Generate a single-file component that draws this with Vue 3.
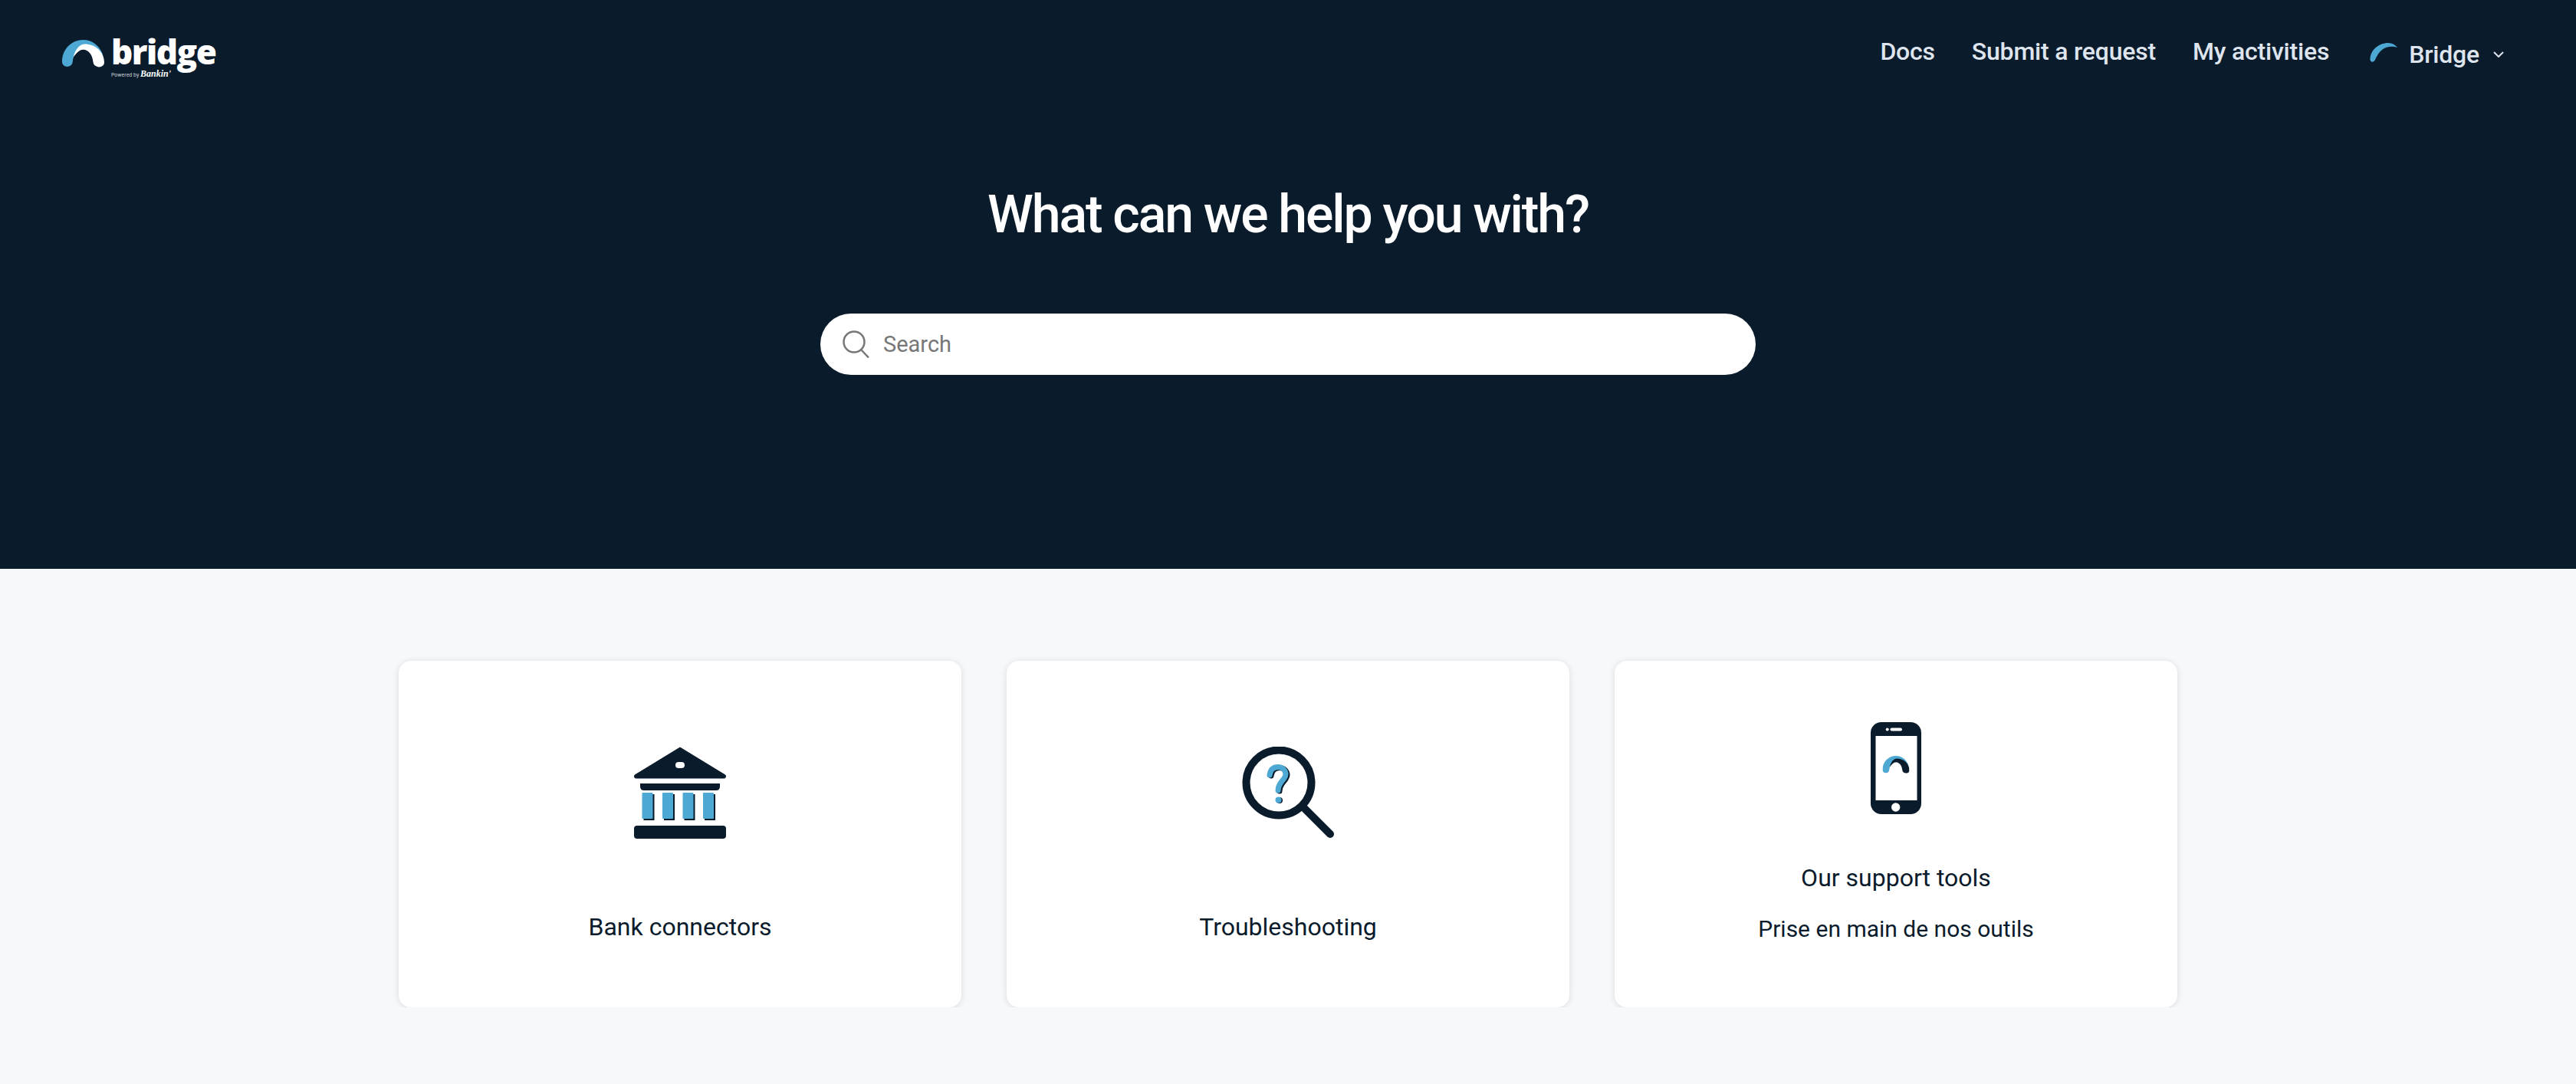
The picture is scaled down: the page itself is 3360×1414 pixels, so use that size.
<template>
  <div class="page">
    <section class="hero">
      <header class="topbar">
        <a class="logo">
          <svg class="logo-arc" viewBox="92 97 166 108">
            <path :d="arcBack" fill="#4da9d4" />
            <path :d="arcFront" fill="#fff" />
          </svg>
          <div class="logo-words">
            <span class="logo-name">bridge</span>
            <span class="logo-sub">Powered by <em>Bankin'</em></span>
          </div>
        </a>
        <nav class="nav">
          <a class="nav-link">Docs</a>
          <a class="nav-link">Submit a request</a>
          <a class="nav-link">My activities</a>
          <button class="account">
            <svg class="account-arc" viewBox="0 0 36 25">
              <path d="M.5 21C1 9 12 0 24 0c5 0 9 2 12 6-6-2-14-2-20 3-5 4-7 9-9 13-2 4-7 3.500-6.500-1z" fill="#4da9d4" />
            </svg>
            <span>Bridge</span>
            <svg class="chevron" viewBox="0 0 14 8">
              <path d="M1 1l6 6 6-6" fill="none" stroke="#dfe5ee" stroke-width="2" />
            </svg>
          </button>
        </nav>
      </header>

      <h1 class="hero-title">What can we help you with?</h1>

      <div class="search">
        <svg class="search-icon" viewBox="0 0 35 36">
          <circle cx="15" cy="15" r="13.500" fill="none" stroke="#777" stroke-width="2.500" />
          <path d="M24 25l10 10.500" fill="none" stroke="#777" stroke-width="2.500" />
        </svg>
        <span class="search-text">Search</span>
      </div>
    </section>

    <section class="cards">
      <a class="card">
        <svg class="card-icon" viewBox="0 0 120 120">
          <path d="M60 1L119 37q2 4-2 4H3q-4 0-2-4z" fill="#0a1b2c" stroke="#0a1b2c" stroke-linejoin="round" />
          <rect x="54" y="20" width="12" height="8" rx="4" fill="#fff" />
          <path d="M8 48h104v4q0 5-5 5H13q-5 0-5-5z" fill="#0a1b2c" />
          <template v-for="x in columnsX" :key="x">
            <rect :x="x + 2" y="62" width="14" height="34" fill="#0a1b2c" />
            <rect :x="x" y="60" width="14" height="34" rx="1" fill="#4da9d4" />
          </template>
          <rect x="0" y="103" width="120" height="17" rx="4" fill="#0a1b2c" />
        </svg>
        <h3 class="card-title">Bank connectors</h3>
      </a>

      <a class="card">
        <svg class="card-icon" viewBox="0 0 120 120">
          <circle cx="48" cy="47" r="42.500" fill="none" stroke="#0a1b2c" stroke-width="10" />
          <path d="M82 81l33 33" fill="none" stroke="#0a1b2c" stroke-width="10" stroke-linecap="round" />
          <g fill="none" stroke-width="7" stroke-linecap="round" stroke-linejoin="round">
            <path :d="hook" stroke="#0a1b2c" transform="translate(2 1)" />
            <path :d="hook" stroke="#4da9d4" />
          </g>
          <circle cx="49" cy="70" r="4" fill="#0a1b2c" />
          <circle cx="47.500" cy="69.500" r="4" fill="#4da9d4" />
        </svg>
        <h3 class="card-title">Troubleshooting</h3>
      </a>

      <a class="card card-tall">
        <svg class="phone-icon" viewBox="0 0 66 120">
          <rect width="66" height="120" rx="14" fill="#0a1b2c" />
          <rect x="6.500" y="18" width="54" height="84" fill="#fff" />
          <rect x="25.500" y="7.500" width="15.500" height="4" rx="2" fill="#fff" />
          <circle cx="21.700" cy="9.500" r="2" fill="#fff" />
          <circle cx="32.700" cy="111" r="5.700" fill="#fff" />
          <svg x="15.500" y="44" width="35" height="23" viewBox="92 97 166 108">
            <path :d="arcBack" fill="#4da9d4" />
            <path :d="arcFront" fill="#0a1b2c" />
          </svg>
        </svg>
        <h3 class="card-title">Our support tools</h3>
        <p class="card-text">Prise en main de nos outils</p>
      </a>
    </section>
  </div>
</template>

<script setup>
const arcBack = 'M92 183C92 133 130 97 175 97c35 0 65 23 77 58l-77-25c-25 0-37 20-42 55-3 23-41 23-41-2z'
const arcFront = 'M136 165c9-37 29-52 44-52 45 0 78 32 78 72 0 25-42 25-44-2-2-28-19-48-39-48-15 0-27 15-39 30z'
const hook = 'M36 37C37 30 41 26.500 47 26.500C53 26.500 57 31 57 36C57 43 47 46 47 57'
const columnsX = [10.500, 37, 63.500, 90]
</script>

<style>
html, body {
  background: #f7f8fa;
}
</style>

<style scoped>
.page {
  font-family: Roboto, "Liberation Sans", sans-serif;
  color: #0a1b2c;
}

.hero {
  height: 742px;
  box-sizing: border-box;
  background: #0a1b2c;
  padding: 0 80px;
  display: flex;
  flex-direction: column;
  align-items: center;
}

.topbar {
  width: 100%;
  height: 142px;
  display: flex;
  justify-content: space-between;
  align-items: flex-start;
}

.logo {
  display: flex;
  align-items: flex-start;
  gap: 9px;
  padding-top: 44px;
  padding-left: 1px;
}

.logo-arc {
  width: 55px;
  height: 36px;
  margin-top: 8px;
}

.logo-words {
  display: flex;
  flex-direction: column;
  color: #fff;
}

.logo-name {
  font-family: "Open Sans", sans-serif;
  font-weight: 800;
  font-size: 44px;
  line-height: 46px;
  letter-spacing: -1.500px;
}

.logo-sub {
  font-size: 7px;
  line-height: 12px;
  color: #c9d0d8;
}

.logo-sub em {
  font-family: "Liberation Serif", serif;
  font-size: 12px;
  font-weight: 700;
  color: #fff;
}

.nav {
  display: flex;
  align-items: flex-start;
  gap: 48px;
  padding-top: 48px;
  margin-right: 14px;
  color: #dfe5ee;
  font-size: 32px;
  font-weight: 500;
  line-height: 38px;
  letter-spacing: -0.200px;
}

.account {
  all: unset;
  display: flex;
  align-items: center;
  margin-left: 5px;
  margin-top: 4px;
}

.account-arc {
  width: 36px;
  height: 25px;
  margin-right: 15px;
  margin-top: -6px;
}

.chevron {
  width: 14px;
  height: 8px;
  margin-left: 18px;
}

.hero-title {
  margin: 0 0 89px;
  padding-top: 98px;
  color: #fff;
  font-size: 68px;
  font-weight: 500;
  line-height: 80px;
  letter-spacing: -2.100px;
}

.search {
  width: 1220px;
  height: 80px;
  box-sizing: border-box;
  background: #fff;
  border-radius: 40px;
  display: flex;
  align-items: center;
  gap: 18px;
  padding-left: 29px;
}

.search-icon {
  width: 35px;
  height: 36px;
}

.search-text {
  color: #777;
  font-size: 29px;
}

.cards {
  width: 2320px;
  margin: 120px auto 0;
  display: grid;
  grid-template-columns: repeat(3, 1fr);
  gap: 59px;
}

.card {
  height: 452px;
  box-sizing: border-box;
  background: #fff;
  border-radius: 16px;
  box-shadow: 0 1px 8px rgba(10, 27, 44, 0.13);
  padding-top: 112px;
  display: flex;
  flex-direction: column;
  align-items: center;
}

.card-tall {
  padding-top: 80px;
}

.card-icon {
  width: 120px;
  height: 120px;
}

.phone-icon {
  width: 66px;
  height: 120px;
}

.card-title {
  margin: 95px 0 0;
  font-size: 32px;
  font-weight: 400;
  line-height: 40px;
}

.card-tall .card-title {
  margin-top: 63px;
}

.card-text {
  margin: 27px 0 0;
  font-size: 30px;
  line-height: 40px;
}
</style>
